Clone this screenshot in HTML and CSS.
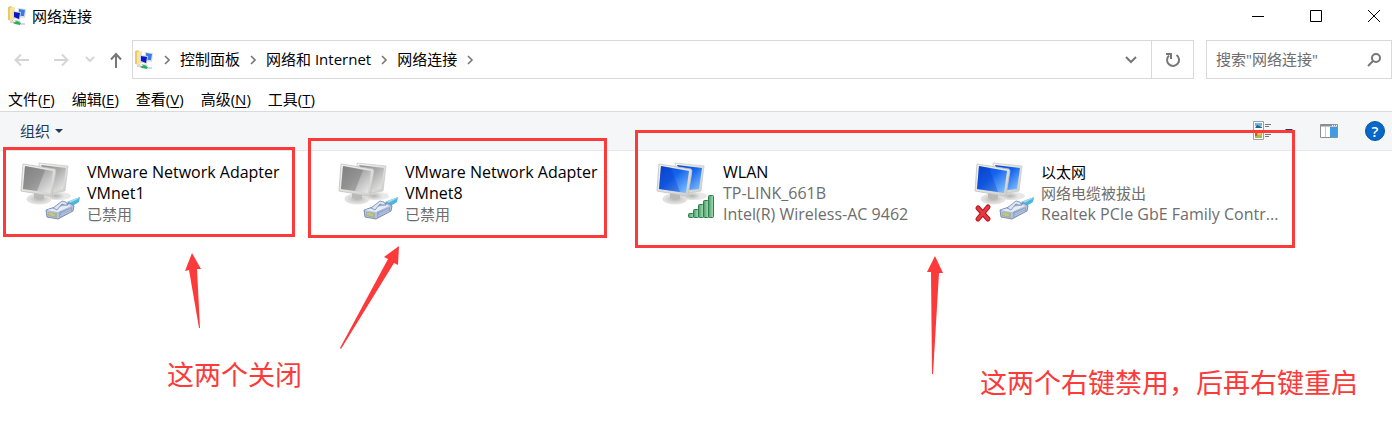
FILE: index.html
```html
<!DOCTYPE html>
<html lang="zh-CN">
<head>
  <meta charset="UTF-8" />
  <title>网络连接</title>
  <link rel="stylesheet" href="styles.css">
</head>
<body>
  <!-- Shared icon parts -->
  <svg class="defs" width="0" height="0" aria-hidden="true">
    <defs>
      <linearGradient id="blue" x1="0" y1="0" x2="1" y2="1">
        <stop offset="0" stop-color="#0a44cf" /><stop offset=".45" stop-color="#1565ee" /><stop offset="1" stop-color="#8cc9ff" />
      </linearGradient>
      <linearGradient id="gray" x1="0" y1="0" x2="1" y2="1">
        <stop offset="0" stop-color="#8c8c8c" /><stop offset=".45" stop-color="#aaaaaa" /><stop offset="1" stop-color="#eeeeee" />
      </linearGradient>
      <linearGradient id="bezel" x1="0" y1="0" x2="1" y2="1">
        <stop offset="0" stop-color="#f4f4f2" /><stop offset="1" stop-color="#cececc" />
      </linearGradient>
      <linearGradient id="bar" x1="0" y1="0" x2="1" y2="0">
        <stop offset="0" stop-color="#4b9d69" /><stop offset="1" stop-color="#a9dfb8" />
      </linearGradient>
      <radialGradient id="foot">
        <stop offset="0" stop-color="#b4b4b2" /><stop offset="1" stop-color="#e9e9e8" />
      </radialGradient>
      <symbol id="back-body" viewBox="0 0 64 64">
        <ellipse cx="42" cy="37" rx="12" ry="4" fill="#d9d9d9" opacity=".6" />
        <ellipse cx="39" cy="37" rx="9" ry="4" fill="url(#foot)" />
        <path d="M22 4L51 7L48 32L36 34L24 30Z" fill="url(#bezel)" stroke="#c6c6c4" stroke-width=".7" />
      </symbol>
      <symbol id="front-body" viewBox="0 0 64 64">
        <ellipse cx="22" cy="40" rx="12" ry="5" fill="url(#foot)" stroke="#d2d2d0" stroke-width=".6" />
        <path d="M17 33L27 34L27 40Q22 42 17 39Z" fill="#b9b9b8" />
        <path d="M6 5L38 10L39 12L35 37L33 37L4 32Z" fill="url(#bezel)" stroke="#c0c0be" stroke-width=".8" />
      </symbol>
      <symbol id="pc-blue" viewBox="0 0 64 64">
        <use href="#back-body" />
        <path d="M24 6L49 9L46 30L36 31Z" fill="url(#blue)" />
        <use href="#front-body" />
        <path d="M8 7L36 12L33 34L6 30Z" fill="url(#blue)" />
        <path d="M8 7L18 9L27 33L6 30Z" fill="#0839c2" opacity=".35" />
      </symbol>
      <symbol id="pc-gray" viewBox="0 0 64 64">
        <use href="#back-body" />
        <path d="M24 6L49 9L46 30L36 31Z" fill="url(#gray)" />
        <use href="#front-body" />
        <path d="M8 7L36 12L33 34L6 30Z" fill="url(#gray)" />
        <path d="M8 7L28 11L20 32L6 30Z" fill="#6f6f6f" opacity=".4" />
      </symbol>
      <symbol id="plug" viewBox="0 0 64 64">
        <path d="M50 43L63 38L62 43L54 48Z" fill="#4db4df" />
        <path d="M52 42L63 38L61 40L53 44Z" fill="#9bdcf3" />
        <path d="M29 51L41 47L53 44L57 47L56 52L41 60L30 58Z" fill="#b3c3de" stroke="#7186ae" stroke-width=".9" />
        <path d="M30 51L42 48L52 46L54 47L41 53Z" fill="#e6edf7" />
        <path d="M42 53L55 48V52L42 59Z" fill="#92a6c9" />
        <path d="M44 55L54 50M43 57L54 52" stroke="#c8d6ea" stroke-width=".7" />
        <path d="M36 49L45 42L49 43L51 46L47 46L45 45L40 51Z" fill="#dce5f2" stroke="#6f86b0" stroke-width=".8" />
        <path d="M31 53L40 54V59L31 57Z" fill="#a9b39e" />
        <path d="M33 54V56M35 54V57M37 55V57" stroke="#e5d458" />
      </symbol>
      <symbol id="folder-net" viewBox="0 0 20 20">
        <path d="M1 1L4 0L6 2V15L1 14Z" fill="#e9c96b" />
        <path d="M3 2L8 1V13L4 15L3 14Z" fill="#f8e5a2" />
        <path d="M11 2L19 3L18 12L11 11Z" fill="#d4dce8" />
        <path d="M12 3L18 4L17 10L12 10Z" fill="#3a79e6" />
        <path d="M6 5L14 6L13 14L6 12Z" fill="#cdd6e2" />
        <path d="M7 6L13 7L12 13L7 11Z" fill="#0718c4" />
        <path d="M8 14L14 15L12 16L7 15Z" fill="#b8c4ce" />
        <path d="M3 16H7M14 18H18" stroke="#a7b6c4" />
        <path d="M6 17L10 15L14 17L13 19L8 18Z" fill="#26ad55" />
      </symbol>
      <symbol id="crumb-arrow" viewBox="0 0 8 10">
        <path d="M2 1L6 5L2 9" fill="none" stroke="#777" stroke-width="1.6" />
      </symbol>
    </defs>
  </svg>

  <header class="titlebar">
    <svg class="app-icon"><use href="#folder-net" /></svg>
    <h1>网络连接</h1>
    <div class="window-buttons">
      <button aria-label="最小化"><svg width="14" height="14"><path d="M1 7.5H13" /></svg></button>
      <button aria-label="最大化"><svg width="14" height="14"><path d="M1.5 1.5H12.5V12.5H1.5Z" /></svg></button>
      <button aria-label="关闭"><svg width="14" height="14"><path d="M1 1L13 13M13 1L1 13" /></svg></button>
    </div>
  </header>

  <div class="navbar">
    <button class="nav-back" aria-label="后退" disabled><svg width="16" height="14"><path d="M15 7H1M7 1.5L1.5 7L7 12.5" /></svg></button>
    <button class="nav-forward" aria-label="前进" disabled><svg width="16" height="14"><path d="M1 7H15M9 1.5L14.5 7L9 12.5" /></svg></button>
    <button class="nav-history" aria-label="最近位置" disabled><svg width="10" height="7"><path d="M1 1L5 5L9 1" /></svg></button>
    <button class="nav-up" aria-label="上移"><svg width="14" height="16"><path d="M7 16V2M2 7.5L7 2L12 7.5" /></svg></button>

    <nav class="address">
      <svg class="app-icon"><use href="#folder-net" /></svg>
      <svg class="crumb-arrow"><use href="#crumb-arrow" /></svg>
      <a href="#">控制面板</a>
      <svg class="crumb-arrow"><use href="#crumb-arrow" /></svg>
      <a href="#">网络和 Internet</a>
      <svg class="crumb-arrow"><use href="#crumb-arrow" /></svg>
      <a href="#">网络连接</a>
      <svg class="crumb-arrow"><use href="#crumb-arrow" /></svg>
      <button class="address-drop" aria-label="展开地址"><svg width="12" height="8"><path d="M1 1L6 6L11 1" /></svg></button>
      <button class="refresh" aria-label="刷新"><svg width="16" height="16"><path d="M4 3.5A6 6 0 1 0 11.5 3" /><path d="M1 2H6V7" /></svg></button>
    </nav>

    <label class="search">
      <input type="text" aria-label="搜索" placeholder='搜索"网络连接"'>
      <svg width="14" height="14"><circle cx="9" cy="5" r="4" /><path d="M6 8L1 13" /></svg>
    </label>
  </div>

  <nav class="menubar">
    <button>文件(<u>F</u>)</button>
    <button>编辑(<u>E</u>)</button>
    <button>查看(<u>V</u>)</button>
    <button>高级(<u>N</u>)</button>
    <button>工具(<u>T</u>)</button>
  </nav>

  <div class="toolbar">
    <button class="organize">组织 <span class="caret"></span></button>
    <button class="view-mode" aria-label="更改视图">
      <svg width="20" height="20">
        <path d="M1.5 .5H11.5V9.5H1.5ZM1.5 10.5H11.5V18.5H1.5Z" fill="#fff" stroke="#a0a0a0" />
        <path d="M3 2H10V5H3Z" fill="#6db5ee" /><path d="M3 7L5 4L10 6V7Z" fill="#2d617e" />
        <path d="M3 12H10V17H3Z" fill="#9bbf55" /><path d="M3 12H5V15H3Z" fill="#df4b36" /><path d="M6 12H9V14H6Z" fill="#f0c93f" />
        <path d="M13 3.5H19M13 5.5H17M13 13.5H19M13 15.5H17" stroke="#777" />
      </svg>
    </button>
    <button class="view-drop" aria-label="更多选项"><span class="caret"></span></button>
    <button class="preview" aria-label="预览窗格">
      <svg width="18" height="14">
        <path d="M.5 .5H17.5V13.5H.5Z" fill="#fff" stroke="#8a8f96" />
        <path d="M1 1.5H17" stroke="#8a8f96" stroke-width="2" />
        <path d="M12 1.5H13M14 1.5H15M16 1.5H17" stroke="#fff" />
        <path d="M5.5 3V13" stroke="#c3c7cc" /><path d="M10 3H17V13H10Z" fill="#419be4" />
      </svg>
    </button>
    <button class="help" aria-label="帮助">?</button>
  </div>

  <main class="connections">
    <article class="connection">
      <svg class="device" viewBox="0 0 64 64"><use href="#pc-gray" /><use href="#plug" /></svg>
      <div>
        <h2>VMware Network Adapter VMnet1</h2>
        <p class="zh">已禁用</p>
      </div>
    </article>
    <article class="connection">
      <svg class="device" viewBox="0 0 64 64"><use href="#pc-gray" /><use href="#plug" /></svg>
      <div>
        <h2>VMware Network Adapter VMnet8</h2>
        <p class="zh">已禁用</p>
      </div>
    </article>
    <article class="connection">
      <svg class="device" viewBox="0 0 64 64">
        <use href="#pc-blue" />
        <g fill="url(#bar)" stroke="#2d7c4b">
          <rect x="35.5" y="54.5" width="5" height="4" rx="1" />
          <rect x="40.5" y="50.5" width="5" height="8" rx="1" />
          <rect x="45.5" y="45.5" width="5" height="13" rx="1" />
          <rect x="50.5" y="41.5" width="5" height="17" rx="1" />
          <rect x="55.5" y="36.5" width="5" height="22" rx="1" />
        </g>
      </svg>
      <div>
        <h2>WLAN</h2>
        <p>TP-LINK_661B</p>
        <p>Intel(R) Wireless-AC 9462</p>
      </div>
    </article>
    <article class="connection">
      <svg class="device" viewBox="0 0 64 64">
        <use href="#pc-blue" /><use href="#plug" />
        <path d="M7 49L17 60M17 48L7 60" fill="none" stroke="#b3121d" stroke-width="5" stroke-linecap="round" />
        <path d="M7 49L17 60M17 48L7 60" fill="none" stroke="#e43a40" stroke-width="3" stroke-linecap="round" />
      </svg>
      <div>
        <h2 class="zh">以太网</h2>
        <p class="zh">网络电缆被拔出</p>
        <p>Realtek PCIe GbE Family Contr...</p>
      </div>
    </article>
  </main>

  <!-- Red markup over the window -->
  <div class="mark mark-vmnet1"></div>
  <div class="mark mark-vmnet8"></div>
  <div class="mark mark-active"></div>
  <svg class="arrows" width="1392" height="434" aria-hidden="true">
    <path d="M192 253L201 269L197 269L200 328H199L189 270L185 271Z" />
    <path d="M399 246L398 265L394 263L341 349L340 348L388 259L384 257Z" />
    <path d="M935 256L943 273L939 273L933 374H932L931 272H927Z" />
  </svg>
  <p class="note note-disable">这两个关闭</p>
  <p class="note note-restart">这两个右键禁用，后再右键重启</p>
</body>
</html>
```
FILE: styles.css
```css
* {
  box-sizing: border-box;
}
body {
  margin: 0;
  position: relative;
  min-height: 100vh;
  overflow: hidden;
  background: #fff;
  color: #000;
  font: 15px/21px "Open Sans", "Noto Sans CJK SC", sans-serif;
}
h1, h2, p {
  margin: 0;
  font-size: 15px;
  font-weight: normal;
}
button {
  display: flex;
  align-items: center;
  justify-content: center;
  padding: 0;
  border: 0;
  background: none;
  color: inherit;
  font: inherit;
}
a {
  color: inherit;
  text-decoration: none;
}
svg {
  display: block;
  flex: none;
}
button svg, .search svg {
  fill: none;
  stroke: #777;
  stroke-width: 2;
}
.defs {
  position: absolute;
}
.app-icon {
  width: 20px;
  height: 20px;
}

/* Title bar */
.titlebar {
  display: flex;
  align-items: center;
  height: 32px;
  padding-left: 7px;
  gap: 5px;
}
.window-buttons {
  display: flex;
  gap: 22px;
  margin-left: auto;
}
.window-buttons button {
  width: 36px;
  height: 32px;
}
.window-buttons svg {
  stroke: #000;
  stroke-width: 1;
}

/* Navigation row */
.navbar {
  display: flex;
  height: 39px;
  margin-top: 8px;
}
.navbar button:disabled svg {
  stroke: #d5d5d5;
}
.nav-back {
  width: 44px;
}
.nav-forward {
  width: 34px;
}
.nav-history {
  width: 24px;
}
.nav-up {
  width: 28px;
  margin-right: 2px;
}
.address {
  display: flex;
  flex: 1;
  align-items: center;
  padding-left: 1px;
  border: 1px solid #d9d9d9;
}
.crumb-arrow {
  width: 8px;
  height: 10px;
  margin: 0 9px;
}
.address-drop {
  width: 40px;
  height: 100%;
  margin-left: auto;
}
.refresh {
  width: 42px;
  height: 100%;
  border-left: 1px solid #d9d9d9;
}
.search {
  display: flex;
  align-items: center;
  width: 186px;
  margin-left: 12px;
  padding: 0 10px 0 9px;
  border: 1px solid #d9d9d9;
}
.search input {
  flex: 1;
  min-width: 0;
  padding: 0;
  border: 0;
  outline: 0;
  background: none;
  font: inherit;
}
.search input::placeholder {
  color: #6d6d6d;
}

/* Menu and toolbar */
.menubar {
  display: flex;
  align-items: center;
  gap: 17px;
  height: 32px;
  padding: 9px 8px 0;
}
.menubar u {
  text-underline-offset: 2px;
}
.toolbar {
  display: flex;
  align-items: center;
  height: 40px;
  padding: 0 7px 0 20px;
  border-top: 1px solid #d9dadb;
  border-bottom: 1px solid #e5e8eb;
  background: #f4f6f8;
  color: #1e395b;
}
.organize {
  gap: 5px;
}
.caret {
  border: 4px solid transparent;
  border-top-color: #1e395b;
  border-bottom: 0;
}
.view-mode {
  margin-left: auto;
}
.view-mode svg, .preview svg {
  stroke: none;
  stroke-width: 1;
}
.view-drop {
  width: 34px;
}
.preview {
  margin: 0 27px 0 14px;
}
.help {
  width: 20px;
  height: 20px;
  border: 1px solid #07579e;
  border-radius: 50%;
  background: #0868c9;
  color: #fff;
  font-weight: 600;
}

/* Connection tiles */
.connections {
  display: grid;
  grid-template-columns: repeat(auto-fill, 318px);
  padding: 8px 0 0 17px;
}
.connection {
  display: flex;
  gap: 6px;
  padding-right: 16px;
}
.connection div {
  min-width: 0;
  padding-top: 3px;
}
.connection h2 {
  max-width: 200px;
}
.connection h2, .connection p {
  font-size: 16px;
}
.connection .zh {
  font-size: 15px;
}
.connection p {
  color: #6d6d6d;
  white-space: nowrap;
}
.device {
  width: 64px;
  height: 64px;
}

/* Markup layer */
.mark {
  position: absolute;
  border: 3px solid #fc3a3a;
}
.mark-vmnet1 {
  top: 147px;
  left: 3px;
  width: 292px;
  height: 90px;
}
.mark-vmnet8 {
  top: 138px;
  left: 308px;
  width: 299px;
  height: 100px;
}
.mark-active {
  top: 130px;
  left: 635px;
  width: 660px;
  height: 118px;
}
.arrows {
  position: absolute;
  top: 0;
  left: 0;
  fill: #fc3a3a;
  pointer-events: none;
}
.note {
  position: absolute;
  color: #fc3a3a;
  font-size: 27px;
  line-height: 36px;
  white-space: nowrap;
}
.note-disable {
  top: 357px;
  left: 167px;
}
.note-restart {
  top: 365px;
  left: 980px;
}
```
